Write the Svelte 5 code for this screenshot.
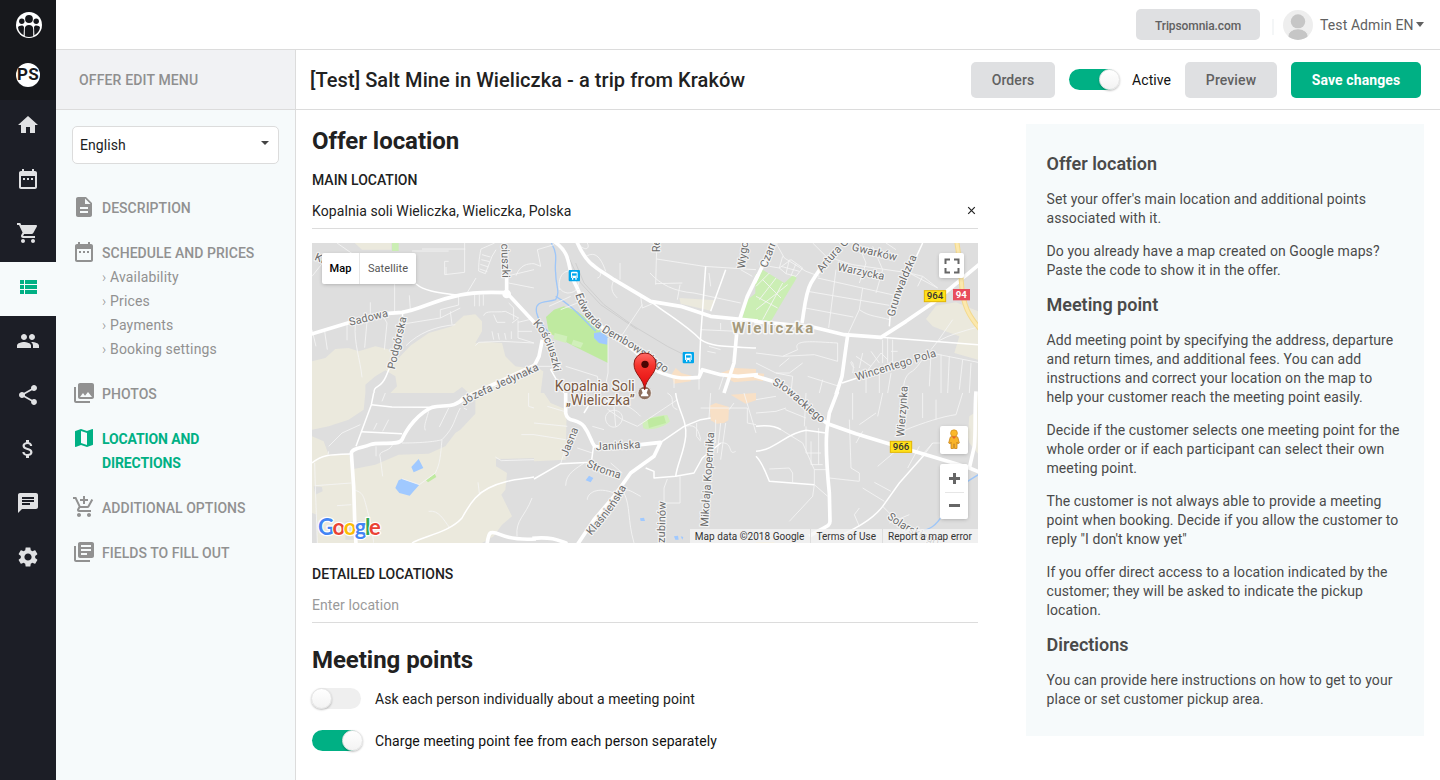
<script>
  const icons = {
    home: 'M10 20v-6h4v6h5v-8h3L12 3 2 12h3v8z',
    calendar: 'M9 11H7v2h2v-2zm4 0h-2v2h2v-2zm4 0h-2v2h2v-2zm2-7h-1V2h-2v2H8V2H6v2H5c-1.11 0-1.99.9-1.99 2L3 20c0 1.1.89 2 2 2h14c1.1 0 2-.9 2-2V6c0-1.1-.9-2-2-2zm0 16H5V9h14v11z',
    cart: 'M7 18c-1.1 0-1.99.9-1.99 2S5.9 22 7 22s2-.9 2-2-.9-2-2-2zM1 2v2h2l3.6 7.59-1.35 2.45c-.16.28-.25.61-.25.96 0 1.1.9 2 2 2h12v-2H7.42c-.14 0-.25-.11-.25-.25l.03-.12.9-1.63h7.45c.75 0 1.41-.41 1.75-1.03l3.58-6.49c.08-.14.12-.31.12-.48 0-.55-.45-1-1-1H5.21l-.94-2H1zm16 16c-1.1 0-1.99.9-1.99 2s.89 2 1.99 2 2-.9 2-2-.9-2-2-2z',
    list: 'M4 14h4v-4H4v4zm0 5h4v-4H4v4zM4 9h4V5H4v4zm5 5h12v-4H9v4zm0 5h12v-4H9v4zM9 5v4h12V5H9z',
    people: 'M16 11c1.66 0 2.99-1.34 2.99-3S17.66 5 16 5c-1.66 0-3 1.34-3 3s1.34 3 3 3zm-8 0c1.66 0 2.99-1.34 2.99-3S9.66 5 8 5C6.34 5 5 6.34 5 8s1.34 3 3 3zm0 2c-2.33 0-7 1.17-7 3.5V19h14v-2.5c0-2.33-4.67-3.5-7-3.5zm8 0c-.29 0-.62.02-.97.05 1.16.84 1.97 1.97 1.97 3.45V19h6v-2.5c0-2.33-4.67-3.5-7-3.5z',
    share: 'M18 16.08c-.76 0-1.44.3-1.96.77L8.91 12.7c.05-.23.09-.46.09-.7s-.04-.47-.09-.7l7.05-4.11c.54.5 1.25.81 2.04.81 1.66 0 3-1.34 3-3s-1.34-3-3-3-3 1.34-3 3c0 .24.04.47.09.7L8.04 9.81C7.5 9.31 6.79 9 6 9c-1.66 0-3 1.34-3 3s1.34 3 3 3c.79 0 1.5-.31 2.04-.81l7.12 4.16c-.05.21-.08.43-.08.65 0 1.61 1.31 2.92 2.92 2.92 1.61 0 2.92-1.31 2.92-2.92s-1.31-2.92-2.92-2.92z',
    money: 'M11.8 10.9c-2.27-.59-3-1.2-3-2.15 0-1.09 1.01-1.85 2.7-1.85 1.78 0 2.44.85 2.5 2.1h2.21c-.07-1.72-1.12-3.3-3.21-3.81V3h-3v2.16c-1.94.42-3.5 1.68-3.5 3.61 0 2.31 1.91 3.46 4.7 4.13 2.5.6 3 1.48 3 2.41 0 .69-.49 1.79-2.7 1.79-2.06 0-2.87-.92-2.98-2.1h-2.2c.12 2.19 1.76 3.42 3.68 3.83V21h3v-2.15c1.95-.37 3.5-1.5 3.5-3.55 0-2.84-2.43-3.81-4.7-4.4z',
    chat: 'M20 2H4c-1.1 0-1.99.9-1.99 2L2 22l4-4h14c1.1 0 2-.9 2-2V4c0-1.1-.9-2-2-2zM6 9h12v2H6V9zm8 5H6v-2h8v2zm4-6H6V6h12v2z',
    settings: 'M19.14 12.94c.04-.3.06-.61.06-.94 0-.32-.02-.64-.07-.94l2.03-1.58c.18-.14.23-.41.12-.61l-1.92-3.32c-.12-.22-.37-.29-.59-.22l-2.39.96c-.5-.38-1.03-.7-1.62-.94l-.36-2.54c-.04-.24-.24-.41-.48-.41h-3.84c-.24 0-.43.17-.47.41l-.36 2.54c-.59.24-1.13.57-1.62.94l-2.39-.96c-.22-.08-.47 0-.59.22L2.74 8.87c-.12.21-.08.47.12.61l2.03 1.58c-.05.3-.09.63-.09.94s.02.64.07.94l-2.03 1.58c-.18.14-.23.41-.12.61l1.92 3.32c.12.22.37.29.59.22l2.39-.96c.5.38 1.03.7 1.62.94l.36 2.54c.05.24.24.41.48.41h3.84c.24 0 .44-.17.47-.41l.36-2.54c.59-.24 1.13-.56 1.62-.94l2.39.96c.22.08.47 0 .59-.22l1.92-3.32c.12-.22.07-.47-.12-.61l-2.01-1.58zM12 15.6c-1.98 0-3.6-1.62-3.6-3.6s1.62-3.6 3.6-3.6 3.6 1.62 3.6 3.6-1.62 3.6-3.6 3.6z',
    doc: 'M14 2H6c-1.1 0-1.99.9-1.99 2L4 20c0 1.1.89 2 1.99 2H18c1.1 0 2-.9 2-2V8l-6-6zm2 16H8v-2h8v2zm0-4H8v-2h8v2zm-3-5V3.5L18.5 9H13z',
    photos: 'M22 16V4c0-1.1-.9-2-2-2H8c-1.1 0-2 .9-2 2v12c0 1.1.9 2 2 2h12c1.1 0 2-.9 2-2zm-11-4l2.03 2.71L16 11l4 5H8l3-4zM2 6v14c0 1.1.9 2 2 2h14v-2H4V6H2z',
    map: 'M20.5 3l-.16.03L15 5.1 9 3 3.36 4.9c-.21.07-.36.25-.36.48V20.5c0 .28.22.5.5.5l.16-.03L9 18.9l6 2.1 5.64-1.9c.21-.07.36-.25.36-.48V3.5c0-.28-.22-.5-.5-.5zM15 19l-6-2.11V5l6 2.11V19z',
    addCart: 'M11 9h2V6h3V4h-3V1h-2v3H8v2h3v3zm-4 9c-1.1 0-1.99.9-1.99 2S5.9 22 7 22s2-.9 2-2-.9-2-2-2zm10 0c-1.1 0-1.99.9-1.99 2s.89 2 1.99 2 2-.9 2-2-.9-2-2-2zm-9.83-3.25l.03-.12.9-1.63h7.45c.75 0 1.41-.41 1.75-1.03l3.86-7.01L19.42 4h-.01l-1.1 2-2.76 5H8.53l-.13-.27L6.16 6l-.95-2-.94-2H1v2h2l3.6 7.59-1.35 2.45c-.16.28-.25.61-.25.96 0 1.1.9 2 2 2h12v-2H7.42c-.13 0-.25-.11-.25-.25z',
    books: 'M4 6H2v14c0 1.1.9 2 2 2h14v-2H4V6zm16-4H8c-1.1 0-2 .9-2 2v12c0 1.1.9 2 2 2h12c1.1 0 2-.9 2-2V4c0-1.1-.9-2-2-2zm-1 9H9V9h10v2zm-4 4H9v-2h6v2zm4-8H9V5h10v2z'
  };

  const rail = ['home', 'calendar', 'cart', 'list', 'people', 'share', 'money', 'chat', 'settings'];

  const menu = [
    { icon: 'doc', label: 'DESCRIPTION' },
    { icon: 'calendar', label: 'SCHEDULE AND PRICES', subs: ['Availability', 'Prices', 'Payments', 'Booking settings'] },
    { icon: 'photos', label: 'PHOTOS' },
    { icon: 'map', label: 'LOCATION AND DIRECTIONS', active: true },
    { icon: 'addCart', label: 'ADDITIONAL OPTIONS' },
    { icon: 'books', label: 'FIELDS TO FILL OUT' }
  ];

  const help = [
    { title: 'Offer location', paras: [
      ["Set your offer's main location and additional points", 'associated with it.'],
      ['Do you already have a map created on Google maps?', 'Paste the code to show it in the offer.']
    ] },
    { title: 'Meeting point', paras: [
      ['Add meeting point by specifying the address, departure', 'and return times, and additional fees. You can add', 'instructions and correct your location on the map to', 'help your customer reach the meeting point easily.'],
      ['Decide if the customer selects one meeting point for the', 'whole order or if each participant can select their own', 'meeting point.'],
      ['The customer is not always able to provide a meeting', 'point when booking. Decide if you allow the customer to', 'reply "I don\'t know yet"'],
      ['If you offer direct access to a location indicated by the', 'customer; they will be asked to indicate the pickup', 'location.']
    ] },
    { title: 'Directions', paras: [
      ['You can provide here instructions on how to get to your', 'place or set customer pickup area.']
    ] }
  ];

  // Map geometry: six tiles of 666x450 units, three units to a pixel.
  const tiles = [
    { x: 0, y: 0,
      areas: [
        ['#ebe9dd', 'M0 355L40 345 70 318 110 315 140 325 190 310 235 320 260 345 295 308 350 270 420 250 455 218 490 214 510 235 510 265 490 300 520 296 570 300 580 340 610 370 666 378V450H0Z'],
        ['#dedede', 'M160 425L190 400 220 382 250 400 255 430 235 450H160Z M425 450L450 432 470 450Z'],
        ['#ebe9dd', 'M128 0H238V20H150Z'], ['#cbeeb4', 'M240 0H260V24H240Z']
      ],
      major: ['M-5 274L115 238C170 220 210 210 270 208C320 202 370 170 440 157C490 145 540 147 584 149', 'M584 149V95', 'M584 149L672 244'],
      minor: ['M312 123C345 150 400 150 440 157', 'M272 208C272 270 245 350 222 400C205 440 185 425 186 450'],
      thin: ['M75 0L125 35M30 62L0 100', 'M248 123V208', 'M292 157L295 200', 'M280 242L385 225 445 195', 'M282 308C320 270 370 250 430 245', 'M385 225V200L440 186V160', 'M415 205L420 245', 'M130 245C125 300 145 350 150 403', 'M38 265L46 320M105 245V292M165 235L158 314M212 217L225 240 217 320', 'M0 260L12 310', 'M175 178V217', 'M465 150L492 105', 'M488 155V190M502 155V190M514 155V188', 'M330 18H460M300 24H410', 'M398 95V55H410M398 95L458 88V0M402 72V95', 'M507 18L548 0M507 18C500 50 500 70 500 84L520 92 540 40 552 20M510 35L535 42M508 50L533 56M505 64L530 72M503 78L526 86', 'M590 98L666 80M590 120L666 135M612 98C625 65 645 62 666 62', 'M515 218C520 200 550 210 580 205L620 225 600 240M545 215L555 238H580', 'M490 308L500 298 570 295 666 300', 'M540 265L545 290M558 270L562 290M578 270L582 290M598 265V288', 'M590 180L605 195V230M618 232V285L666 300M618 265H660M618 238L660 228']
    },
    { x: 666, y: 0,
      areas: [
        ['#bfeaa0', 'M36 222L60 200 90 190 130 205 175 240 222 285 222 360 120 310 45 270Z'],
        ['#d0efba', 'M62 270L100 280 96 300 58 288ZM118 290L148 300 140 315 112 305Z'],
        ['#a0c9ff', 'M180 270L205 266 222 284 220 305 195 300 180 285Z'],
        ['#ebe9dd', 'M436 165L545 172 530 203 440 182Z'],
        ['#ebe9dd', 'M0 370L28 385 20 450H0Z'],
        ['#f8e0c6', 'M412 395L425 375 442 390 472 398 470 415 420 422ZM560 390L600 375 666 378V412L600 418 570 400Z'],
        ['#cbeeb4', 'M625 225L640 170 666 150V232Z']
      ],
      water: ['M52 0C75 40 60 55 65 90C65 130 80 145 65 170C35 180 0 170 8 210C15 240 30 250 45 270', 'M65 160C110 185 130 210 185 265'],
      major: ['M60 -5C110 30 100 60 115 105L132 140', 'M132 140C160 230 210 262 300 322L370 385', 'M128 -5C160 70 190 75 240 110L350 175 440 190 530 220 672 234', 'M370 385C420 405 440 408 495 403L505 380 560 395 612 400 672 395', 'M672 95L640 160 610 250 600 360 570 450', 'M25 290L15 340 0 370'],
      minor: ['M350 175C400 215 450 240 500 290C530 310 560 310 666 315', 'M495 403L500 280 515 70', 'M80 370L50 380 90 450', 'M575 80L530 205'],
      thin: ['M95 370L190 400 200 450', 'M222 285V390L210 450', 'M368 15L365 125', 'M368 48L510 70 666 80', 'M348 90C380 125 420 145 480 150L620 180', 'M365 122L445 120', 'M438 125L430 170', 'M360 180L325 195 320 160M325 185L265 275 240 270', 'M240 110C225 140 240 155 250 165M258 60V110', 'M620 80L655 100M525 90L530 130', 'M0 62L20 70 10 20 60 5', 'M130 0C150 25 170 20 160 0M150 45C180 20 200 40 215 85M175 60C195 70 210 100 190 105', 'M76 140C70 90 100 75 120 90C140 110 140 150 100 150C75 145 80 130 76 140', 'M80 200L130 180M45 190L110 160', 'M500 260L610 265M560 240V260', 'M525 310L560 320M520 325L545 330', 'M420 408V435M495 403V440M555 440L570 395', 'M0 370H75'],
      rail: ['M125 60L150 120 210 185 300 250 400 310 450 335', 'M105 45L140 120 200 185 310 260']
    },
    { x: 1332, y: 0,
      areas: [
        ['#cbeeb4', 'M-2 95L20 80 85 120 112 95 122 105 80 175 45 235-2 230Z'],
        ['#ebe9dd', 'M510 228L540 188 600 178 666 205V350L595 330 610 280 560 262 530 250Z'],
        ['#f8e0c6', 'M0 390L25 392 20 415 0 412Z']
      ],
      major: ['M-5 236L50 240 170 252 265 275 375 283 450 235 530 180 672 62', 'M-5 120L50 5', 'M138 240C145 200 148 150 165 120C180 95 190 80 200 70', 'M275 278C270 310 265 350 258 400L240 455', 'M-5 398L50 415'],
      highway: ['M602 -5C610 40 612 70 616 115C620 190 640 220 672 258'],
      minor: ['M375 283L666 305', 'M400 250L403 210 500 0', 'M258 420L320 400'],
      thin: ['M0 130L40 90M10 170L60 105M0 200L95 125M20 230L80 120M0 160L65 195M20 110L75 165', 'M60 0L85 45 150 85 190 100', 'M170 0L210 40 290 65 460 90 545 135', 'M185 105L430 160M155 145L400 187M148 195L292 222', 'M240 80L218 255M320 135L310 200 275 275M310 200C340 222 370 220 400 230', 'M305 0L330 60 310 120M350 10L380 80 360 150M420 20L390 0M440 85L500 100 485 130M500 100L545 135', 'M70 75L105 50 140 75 120 100 90 92ZM100 50L90 92M120 62L105 98M75 70L130 85', 'M40 70L70 75 80 40', 'M0 330L80 340 125 320C110 290 160 295 245 300V355L175 335 80 340', 'M395 285V355L400 380M380 290V360M410 290V365M405 325H425', 'M300 340L345 370M345 325L370 360M320 330L310 375M295 375C270 350 300 345 290 390', 'M525 325C490 350 490 375 460 390C440 410 445 430 440 450', 'M375 330L325 395M375 330L395 350', 'M525 320L545 295C580 275 620 265 666 252', 'M525 330L666 358M580 340L575 450M555 335V450M525 330L520 430M620 350L610 440', 'M70 370L100 345M100 390L140 360M0 360L60 390 110 400 105 450M60 390L100 390M190 450L200 410M155 400L250 430', 'M590 230L545 295', 'M330 405V450M370 390V450M405 390L395 450M645 360L640 450']
    },
    { x: 0, y: 450,
      areas: [
        ['#ebe9dd', 'M0 0H160L155 50 110 80 50 100 0 110ZM490 0H672V195L552 198V220L585 240 580 290 568 305 600 370 570 395 545 430 510 450H0V130L35 145 50 185 110 182 125 228 190 215 260 185 350 182 400 160 430 120 445 110 490 62V20Z'],
        ['#dedede', 'M5 280L30 282 32 295 10 305ZM100 385H160V440H100ZM0 360L15 365V450H0Z'],
        ['#a0c9ff', 'M298 222L320 198 334 225 305 238ZM260 262L270 257 322 275 293 308 262 300 250 285Z'],
        ['#bfeaa0', 'M342 262L368 242 373 252 348 268Z']
      ],
      major: ['M672 -85L455 15C430 45 400 35 360 43C320 60 285 105 270 140C260 160 200 145 175 155C150 165 120 165 118 180L125 280 128 380 132 455', 'M525 455C530 420 530 410 565 425C600 440 640 440 672 438'],
      minor: ['M185 0L178 35 132 160', 'M178 35L240 42 360 43', 'M0 210C30 185 50 185 118 183', 'M300 450C330 430 410 420 450 375C480 320 500 300 530 285C580 260 620 260 666 252', 'M148 116L270 122'],
      thin: ['M8 210L10 280 16 450M10 278L118 270', 'M50 175L48 185M50 160L90 120 145 95', 'M185 110L195 90M212 115L230 80M192 160V190M242 155C230 180 195 170 205 195L212 250', 'M210 25L220 0', 'M350 55C340 90 335 100 340 112M410 45L382 102M445 45C425 80 430 100 390 140M390 140C375 145 330 150 270 150', 'M390 140C385 190 385 210 370 240L322 275 270 257', 'M455 45L465 50', 'M130 292C155 300 155 310 168 360 180 400 185 450 185 450', 'M75 338L118 335', 'M350 355C380 350 395 380 412 403', 'M498 268L502 300', 'M550 192L568 203 666 200', 'M628 125H666M650 0V40L666 45', 'M660 315C640 370 610 380 615 430']
    },
    { x: 666, y: 450,
      areas: [
        ['#ebe9dd', 'M0 0H30L50 30 98 50 95 200 0 205Z'],
        ['#d0efba', 'M325 90C335 75 370 68 400 66L408 85C390 105 340 115 328 105Z'],
        ['#bfeaa0', 'M340 78L390 68 396 90 345 105Z'],
        ['#a0c9ff', 'M155 262L165 248 178 255 170 268ZM318 376L330 374 333 384 320 384ZM420 430L432 428 434 440 424 440ZM440 430L448 432 445 440Z'],
        ['#f8e0c6', 'M527 38L545 30 585 42 583 82 570 90 548 92 530 82ZM590 5L666 0V22L635 32Z']
      ],
      major: ['M95 0V60C100 90 130 75 150 100C180 140 170 170 200 160L320 155 380 148 360 190 290 240 240 310', 'M240 310L180 380 130 455', 'M-5 436C60 430 80 445 100 452'],
      minor: ['M380 148L450 100 500 80 530 75', 'M425 0C430 50 460 80 455 130C450 180 430 210 425 250', 'M150 60L175 20', 'M0 258L80 212 172 208 180 150', 'M335 225L360 235V255L425 250 480 240 505 195 560 150'],
      thin: ['M0 90L100 100M0 125L95 140', 'M80 212L100 145 130 110', 'M130 165L175 180', 'M95 278C95 240 130 225 150 210', 'M215 70C225 40 270 50 265 80C250 120 210 100 215 70M220 48L265 80M240 40L245 100', 'M265 80L310 100 430 20M250 25C290 40 310 60 320 70', 'M400 0C430 15 400 40 430 50', 'M390 330V285L400 258M385 330H438V250', 'M455 100C490 90 495 120 500 140M488 90V130L500 145', 'M545 80V150M575 90L560 200M530 0L525 75M560 90L550 180M600 30L585 50M500 45H640V90L666 95', 'M560 150C600 145 580 190 605 175', 'M240 300C190 280 160 300 160 320M270 290C290 290 300 300 320 310M270 300C290 340 280 380 300 450', 'M40 40L90 55M175 100L210 110M230 210L265 240', 'M630 0L666 120'],
    },
    { x: 1332, y: 450,
      areas: [
        ['#ebe9dd', 'M635 130L640 70 655 60 655 0H672V190L640 150Z'],
        ['#f8e0a0', 'M0 448H55V450H0Z']
      ],
      water: ['M672 242L630 268', 'M560 365C540 400 520 410 490 415L470 425'],
      major: ['M245 -5L220 60 215 95C205 150 215 250 220 300L222 385C222 405 200 400 160 430', 'M50 -35C100 -5 120 25 215 92L300 122 430 162 510 185 600 212 640 225 672 238', 'M660 -5C655 60 660 110 655 160L640 225'],
      minor: ['M505 185L430 270 380 340C350 380 300 410 220 440', 'M0 100C40 95 60 100 75 110', 'M0 175C60 170 90 120 150 112L210 120', 'M0 190C20 210 30 240 40 265L175 275'],
      thin: ['M75 110L140 150 175 230V275M40 228L100 225 110 240V268M175 230H212M150 100V180H195M165 145V215H200M188 105V215', 'M88 50L150 75M150 0L145 100', 'M175 275L170 310 100 385M175 275L215 310', 'M320 285L385 325M355 268L405 295M380 340L440 400 500 430', 'M280 80L285 225 310 240V265L220 255', 'M290 0V80M310 95L360 60M320 115L300 150M380 0L365 70M415 130L450 110M430 165L365 220', 'M450 110C500 90 560 70 600 65L620 0M500 75V0M540 80V20M490 160L455 225M530 150L495 190', 'M530 150H600M505 185L530 150', 'M310 345L295 365 310 400', 'M400 390L460 365', 'M0 60L60 55 90 45M0 20L60 10']
    }
  ];

  const labels = [
    ['Sadowa', 'M114 248L240 218'],
    ['Podgórska', 'M248 380L284 222'],
    ['ciuszki', 'M568 2L572 130'],
    ['Kr', 'M6 50L60 72'],
    ['Józefa Jedynaka', 'M456 490L480 472 710 368'],
    ['Kościuszki', 'M662 242C690 270 715 320 725 385L730 420'],
    ['Edwarda Dembowskiego', 'M790 155C820 245 860 262 950 312C1000 345 1030 370 1100 418'],
    ['Re', 'M1044 28V-30'],
    ['Wygod', 'M1298 78L1312-30'],
    ['Czarn', 'M1364 76L1404-30'],
    ['Artura G', 'M1530 90C1560 50 1590 20 1625-15'],
    ['Gwarków', 'M1618 22L1760 56'],
    ['Warzycka', 'M1575 82L1720 112'],
    ['Grunwaldzka', 'M1748 222C1760 160 1785 110 1815 40'],
    ['Wincentego Pola', 'M1634 413L1900 332'],
    ['Słowackiego', 'M1380 425C1430 445 1450 480 1540 550'],
    ['Wierzynka', 'M1776 582L1788 420'],
    ['Jasna', 'M766 642L805 545'],
    ['Janińska', 'M852 622L1010 614'],
    ['Stroma', 'M822 670C850 685 880 695 940 712'],
    ['Klaśnieńska', 'M838 878C870 840 910 800 950 720'],
    ['zubinów', 'M1058 900L1062 760'],
    ['Mikołaja Kopernika', 'M1188 852L1208 550'],
    ['Solarskiego', 'M1724 824C1760 855 1790 870 1880 910']
  ];
</script>

{#snippet icon(name)}
  <svg class="icon" viewBox="0 0 24 24" width="24" height="24"><path d={icons[name]} /></svg>
{/snippet}

<div class="app">
  <nav class="rail">
    <div class="brands">
      <svg width="28" height="28" viewBox="0 0 28 28">
        <circle cx="14" cy="14" r="13" fill="#fff" />
        <g fill="#17181c">
          <circle cx="14" cy="8" r="3.9" />
          <circle cx="6.8" cy="10.2" r="2.7" /><circle cx="21.2" cy="10.2" r="2.7" />
          <path d="M9.8 25.2V18c0-2.600 1.700-4 4.200-4s4.200 1.400 4.200 4v7.200a13 13 0 0 1-8.400 0z" />
          <path d="M8.600 24.300C5.500 22.500 3.400 20 3 16.500c.4-1.200 2-1.900 3.600-1.900 1.300 0 2.200.6 2.400 1.700zM19.400 24.300c3.100-1.800 5.200-4.300 5.600-7.800-.4-1.200-2-1.900-3.600-1.900-1.300 0-2.200.6-2.400 1.700z" />
        </g>
      </svg>
      <div class="ps"><span>PS</span></div>
    </div>
    {#each rail as name}
      <div class="rail-item" class:on={name === 'list'}>{@render icon(name)}</div>
    {/each}
  </nav>

  <div class="page">
    <header class="topbar">
      <button class="btn small">Tripsomnia.com</button>
      <div class="sep"></div>
      <svg class="avatar" width="30" height="30" viewBox="0 0 30 30">
        <clipPath id="face"><circle cx="15" cy="15" r="15" /></clipPath>
        <g clip-path="url(#face)">
          <rect width="30" height="30" fill="#eee" />
          <circle cx="15" cy="11.500" r="7.200" fill="#c6c6c6" />
          <ellipse cx="15" cy="27" rx="10.300" ry="8.300" fill="#c6c6c6" stroke="#eee" />
        </g>
      </svg>
      <span class="user">Test Admin EN</span>
      <span class="caret"></span>
    </header>

    <div class="body">
      <aside class="side">
        <div class="side-head">OFFER EDIT MENU</div>
        <div class="select"><span>English</span><i></i></div>
        <ul>
          {#each menu as m}
            <li class:active={m.active}>
              {@render icon(m.icon)}
              <div class="entry">
                <div class="name">{m.label}</div>
                {#each m.subs ?? [] as s}<div class="sub"><b>›</b> {s}</div>{/each}
              </div>
            </li>
          {/each}
        </ul>
      </aside>

      <div class="work">
        <div class="head">
          <h1>[Test] Salt Mine in Wieliczka - a trip from Kraków</h1>
          <button class="btn orders">Orders</button>
          <div class="toggle on"><i></i></div>
          <span class="state">Active</span>
          <button class="btn preview">Preview</button>
          <button class="btn save">Save changes</button>
        </div>

        <div class="cols">
          <main>
            <h2>Offer location</h2>
            <div class="label">MAIN LOCATION</div>
            <div class="input">
              <span>Kopalnia soli Wieliczka, Wieliczka, Polska</span>
              <svg width="9" height="9" viewBox="0 0 9 9"><path d="M1.200 1.200l6.600 6.600M7.800 1.200L1.200 7.800" stroke="#222" stroke-width="1.200" /></svg>
            </div>

            <div class="map">
              <svg class="canvas" viewBox="0 0 1998 900" width="666" height="300">
                <rect width="1998" height="900" fill="#dedede" />
                {#each tiles as t}
                  <g transform="translate({t.x} {t.y})">
                    {#each t.areas as a}<path d={a[1]} fill={a[0]} />{/each}
                  </g>
                {/each}
                {#each tiles as t}
                  <g transform="translate({t.x} {t.y})" fill="none" stroke-linejoin="round">
                    {#each t.water ?? [] as d}<path {d} stroke="#9ec6f8" stroke-width="4" />{/each}
                    {#each t.rail ?? [] as d}<path {d} stroke="#cfcfcf" stroke-width="3" />{/each}
                    {#each t.thin as d}<path {d} stroke="#f5f5f5" stroke-width="2.600" />{/each}
                    {#each t.minor as d}<path {d} stroke="#fff" stroke-width="4.500" />{/each}
                  </g>
                {/each}
                {#each tiles as t}
                  <g transform="translate({t.x} {t.y})" fill="none" stroke-linejoin="round">
                    {#each t.major as d}<path {d} stroke="#fff" stroke-width="11" />{/each}
                    {#each t.highway ?? [] as d}
                      <path {d} stroke="#f3d98c" stroke-width="15" /><path {d} stroke="#fbe8ae" stroke-width="9" />
                    {/each}
                  </g>
                {/each}
                <circle cx="584" cy="153" r="13" fill="#fff" />

                <g class="roads">
                  {#each labels as l, i}
                    <path id="road{i}" d={l[1]} fill="none" />
                    <text><textPath href="#road{i}">{l[0]}</textPath></text>
                  {/each}
                </g>

                <text class="town" x="1260" y="271" textLength="244">Wieliczka</text>

                {#each [[787, 98], [1129, 344]] as s}
                  <g transform="translate({s[0]} {s[1]})">
                    <rect x="-17" y="-17" width="34" height="34" rx="3" fill="#00a6ec" />
                    <path d="M-10 7v-15q0-4 4-4h12q4 0 4 4v15h-3v5h-4v-5h-6v5h-4v-5z" fill="#fff" />
                    <path d="M-7-7h14v7h-14z" fill="#00a6ec" /><circle cx="-6" cy="4" r="1.800" fill="#00a6ec" /><circle cx="6" cy="4" r="1.800" fill="#00a6ec" />
                  </g>
                {/each}

                <g class="shield">
                  <rect x="1837" y="143" width="64" height="33" fill="#ffe11a" stroke="#e3b500" stroke-width="3" />
                  <text x="1869" y="169">964</text>
                  <rect x="1735" y="595" width="64" height="33" fill="#ffe11a" stroke="#e3b500" stroke-width="3" />
                  <text x="1767" y="621">966</text>
                  <rect x="1923" y="138" width="51" height="34" fill="#e84c5b" />
                  <text x="1948" y="165" class="inv">94</text>
                </g>

                <circle cx="998" cy="450" r="20" fill="#8d6e5c" stroke="#fff" stroke-width="2" />
                <path d="M987 460h22v-4l-5-6 4-12h-20l4 12-5 6z" fill="#fff" />
                <g class="poi">
                  <text x="728" y="444" textLength="240">Kopalnia Soli</text>
                  <text x="762" y="486" textLength="206">„Wieliczka”</text>
                </g>

                <path d="M998 440C995 405 966 395 966 363a33 33 0 0 1 66 0C1032 395 1001 405 998 440z" fill="url(#pin)" stroke="#8f1710" stroke-width="3" />
                <circle cx="999" cy="364" r="11" fill="#4b0502" />
                <linearGradient id="pin" x2="0" y2="1"><stop stop-color="#ff6a66" /><stop offset=".35" stop-color="#f5342c" /><stop offset="1" stop-color="#e2060b" /></linearGradient>

                <g class="google">
                  <text x="18" y="876" textLength="188"><tspan fill="#4285f4">G</tspan><tspan fill="#ea4335">o</tspan><tspan fill="#fbbc05">o</tspan><tspan fill="#4285f4">g</tspan><tspan fill="#34a853">l</tspan><tspan fill="#ea4335">e</tspan></text>
                </g>
              </svg>

              <div class="types"><b>Map</b><span>Satellite</span></div>
              <div class="ctl full"><svg width="16" height="16" viewBox="0 0 16 16"><path d="M1.500 6V1.500H6M10 1.500h4.500V6M14.500 10v4.500H10M6 14.500H1.500V10" fill="none" stroke="#666" stroke-width="2" /></svg></div>
              <div class="ctl peg">
                <svg width="14" height="22" viewBox="0 0 14 22">
                  <path d="M3 9Q3 7.500 5 7.500h4q2 0 2 1.500l1.300 5-1.600.8L10 13v6.500H7.500V15h-1v4.500H4V13l-.7 1.800-1.600-.8z" fill="#f9b42a" stroke="#c98417" stroke-width=".8" />
                  <circle cx="7" cy="4.200" r="3.400" fill="#fbb829" stroke="#d08c1b" stroke-width=".7" />
                  <path d="M4.600 7.500h4.800L7 10z" fill="#e8642c" />
                </svg>
              </div>
              <div class="ctl zoom"><i class="plus"></i><hr /><i></i></div>
              <div class="credits"><span>Map data ©2018 Google</span><span>Terms of Use</span><span>Report a map error</span></div>
            </div>

            <div class="label detail">DETAILED LOCATIONS</div>
            <div class="input ph"><span>Enter location</span></div>
            <h2 class="second">Meeting points</h2>
            <div class="row"><div class="toggle"><i></i></div><span>Ask each person individually about a meeting point</span></div>
            <div class="row"><div class="toggle on"><i></i></div><span class="dark">Charge meeting point fee from each person separately</span></div>
          </main>

          <section class="help">
            {#each help as h}
              <h3>{h.title}</h3>
              {#each h.paras as p}
                <p>{#each p as line}<span>{line}</span>{/each}</p>
              {/each}
            {/each}
          </section>
        </div>
      </div>
    </div>
  </div>
</div>

<style>
  :global(body) { margin: 0; background: #fff; }
  * { box-sizing: border-box; }
  .app { display: flex; width: 1440px; height: 780px; overflow: hidden; font: 14px/20px Roboto, sans-serif; letter-spacing: .085px; color: #212121; }
  .icon { display: block; flex: none; fill: currentColor; }
  h1, h2, h3, p, ul { margin: 0; padding: 0; font-weight: 500; }

  .rail { width: 56px; background: #1c1e26; color: #e0e1e3; flex: none; }
  .brands { height: 100px; background: #17181c; padding: 11px 0 0 15px; display: flex; flex-direction: column; gap: 24px; }
  .ps { width: 24px; height: 24px; margin-left: 1px; border-radius: 50%; background: #fff; display: flex; align-items: center; justify-content: center; }
  .ps span { font: 700 17px/17px Roboto, sans-serif; letter-spacing: .3px; margin-top: -1px; color: #17181c; }
  .rail-item { height: 54px; padding: 13px 16px 17px; }
  .rail-item.on { background: #f6fafb; color: #00b084; }

  .page { flex: 1; min-width: 0; display: flex; flex-direction: column; }
  .topbar { height: 50px; border-bottom: 1px solid #dcdcdc; display: flex; align-items: center; justify-content: flex-end; padding-right: 16px; }
  .btn { border: 0; border-radius: 5px; background: #dfe0e2; color: #616161; font: 500 14px/20px Roboto, sans-serif; letter-spacing: .1px; height: 36px; padding: 0; flex: none; }
  .btn.small { width: 124px; height: 31px; font-size: 12px; letter-spacing: -.1px; padding-top: 2px; }
  .sep { width: 2px; height: 16px; margin: 4px 9px 0 12px; background: #f4f6f7; }
  .user { margin-left: 7px; font-size: 14px; letter-spacing: .1px; color: #616161; width: 95px; white-space: nowrap; }
  .caret { border: 4px solid transparent; border-top: 5px solid #616161; border-bottom: 0; margin-left: 1px; }

  .body { flex: 1; display: flex; }
  .side { width: 240px; border-right: 1px solid #dcdcdc; background: #f6fafb; flex: none; }
  .side-head { height: 60px; border-bottom: 1px solid #dcdcdc; background: #f1f2f4; color: #8f8f8f; padding: 20px 23px; font-weight: 500; letter-spacing: .15px; }
  .select { margin: 16px 16px 32px; height: 38px; border: 1px solid #dcdcdc; border-radius: 5px; background: #fff; display: flex; align-items: center; justify-content: space-between; padding: 0 9px 0 7px; }
  .select i { border: 4px solid transparent; border-top-color: #444; border-bottom: 0; margin-top: -4px; }
  ul { list-style: none; display: flex; flex-direction: column; gap: 21px; padding: 0 60px 0 16px; color: #919191; line-height: 24px; }
  li { display: flex; gap: 6px; }
  li .icon { margin-top: -1px; }
  .name { font-weight: 500; white-space: nowrap; letter-spacing: .03px; }
  .sub { letter-spacing: .17px; font-weight: 400; white-space: nowrap; }
  .sub b { font-weight: 300; }
  .active { color: #00b084; }
  .active .name { font-weight: 700; letter-spacing: -.12px; white-space: normal; width: 110px; }

  .work { flex: 1; min-width: 0; }
  .head { height: 60px; border-bottom: 1px solid #dcdcdc; display: flex; align-items: center; padding: 0 19px 0 14px; }
  h1 { flex: 1; font-size: 20px; line-height: 28px; letter-spacing: .06px; }
  .orders { width: 84px; margin-right: 14px; }
  .state { margin: 0 14px 0 14px; width: 39px; color: #111; }
  .preview { width: 92px; margin-right: 14px; }
  .save { width: 130px; background: #00b084; color: #fff; font-weight: 700; }
  .toggle { width: 49px; height: 21px; border-radius: 11px; background: #efefef; flex: none; }
  .toggle i { display: block; width: 21px; height: 21px; border-radius: 50%; margin-left: -1px; background: linear-gradient(#fff, #f3f3f3); border: 1px solid #e2e2e2; box-shadow: 0 1px 2px rgba(0, 0, 0, .25); }
  .toggle.on { background: #00b084; }
  .toggle.on i { margin-left: 30px; }

  .cols { display: flex; justify-content: space-between; align-items: flex-start; padding: 14px 16px 0; }
  main { width: 666px; }
  h2 { font-size: 24px; line-height: 32px; letter-spacing: -.05px; font-weight: 700; padding-top: 1px; }
  .label { margin-top: 13px; font-weight: 500; letter-spacing: 0; }
  .input { margin-top: 3px; height: 36px; border-bottom: 1px solid #dcdcdc; display: flex; align-items: center; justify-content: space-between; padding-right: 2px; }
  .ph { color: #9a9a9a; }
  .detail { margin-top: 21px; }
  h2.second { margin-top: 20px; padding: 1px 0 0; }
  .row { height: 42px; display: flex; align-items: center; gap: 14px; }
  .row .toggle { margin-bottom: 1px; }
  h2.second + .row { margin-top: 2px; }
  .dark { color: #111; }

  .map { position: relative; width: 666px; height: 300px; margin-top: 14px; overflow: hidden; }
  .canvas { display: block; }
  .canvas text { font-family: Roboto, sans-serif; letter-spacing: 0; paint-order: stroke; stroke-linejoin: round; }
  .roads text { font-size: 33px; fill: #6b6b6b; stroke: #f3f3f3; stroke-width: 7px; letter-spacing: .2px; }
  .canvas .town { font-size: 45px; font-weight: 700; fill: #a59a7c; stroke: #f6f6f6; stroke-width: 9px; }
  .poi text { font-size: 42px; fill: #7a5a44; stroke: #f4f4f4; stroke-width: 8px; }
  .shield text { font-size: 29px; font-weight: 500; fill: #333; text-anchor: middle; }
  .shield .inv { fill: #fff; font-weight: 700; }
  .google text { font-family: Lato, sans-serif; font-size: 66px; stroke: #fff; stroke-width: 7px; font-weight: 700; }
  .types { position: absolute; left: 10px; top: 10px; width: 94px; height: 31px; display: flex; background: #fff; border-radius: 2px; box-shadow: 0 1px 4px -1px rgba(0, 0, 0, .3); font-size: 11px; line-height: 32px; letter-spacing: .08px; color: #565656; }
  .types b { width: 38px; text-align: center; color: #000; font-weight: 500; border-right: 1px solid #e6e6e6; }
  .types span { flex: 1; text-align: center; }
  .ctl { position: absolute; background: #fff; border-radius: 2px; box-shadow: 0 1px 4px -1px rgba(0, 0, 0, .3); display: flex; align-items: center; justify-content: center; }
  .full { left: 627px; top: 10px; width: 25px; height: 25px; }
  .peg { left: 628px; top: 183px; width: 28px; height: 28px; }
  .zoom { left: 628px; top: 221px; width: 28px; height: 55px; flex-direction: column; justify-content: space-between; padding: 13px 0 12px; }
  .zoom i { width: 11px; height: 3px; background: #666; flex: none; }
  .zoom .plus::after { content: ''; display: block; width: 3px; height: 11px; margin: -4px 4px; background: #666; }
  hr { width: 19px; border: 0; height: 1px; background: #e6e6e6; margin: 0; }
  .credits { position: absolute; right: 0; bottom: 0; height: 14px; display: flex; background: rgba(245, 245, 245, .75); font-size: 10px; line-height: 15px; letter-spacing: .03px; color: #333; white-space: nowrap; }
  .credits span { padding: 0 6px 0 5px; }
  .credits span + span { border-left: 1px solid #ddd; }

  .help { width: 398px; height: 612px; background: #f6fafb; color: #4a4a4a; padding: 29px 20px 0 20.500px; }
  h3 { font-size: 18px; line-height: 21px; letter-spacing: 0; font-weight: 600; margin-bottom: 16px; }
  p + h3 { margin-top: 14px; }
  p { font-weight: 400; line-height: 19px; }
  p + p { margin-top: 14px; }
  p span { display: block; white-space: nowrap; }
</style>
